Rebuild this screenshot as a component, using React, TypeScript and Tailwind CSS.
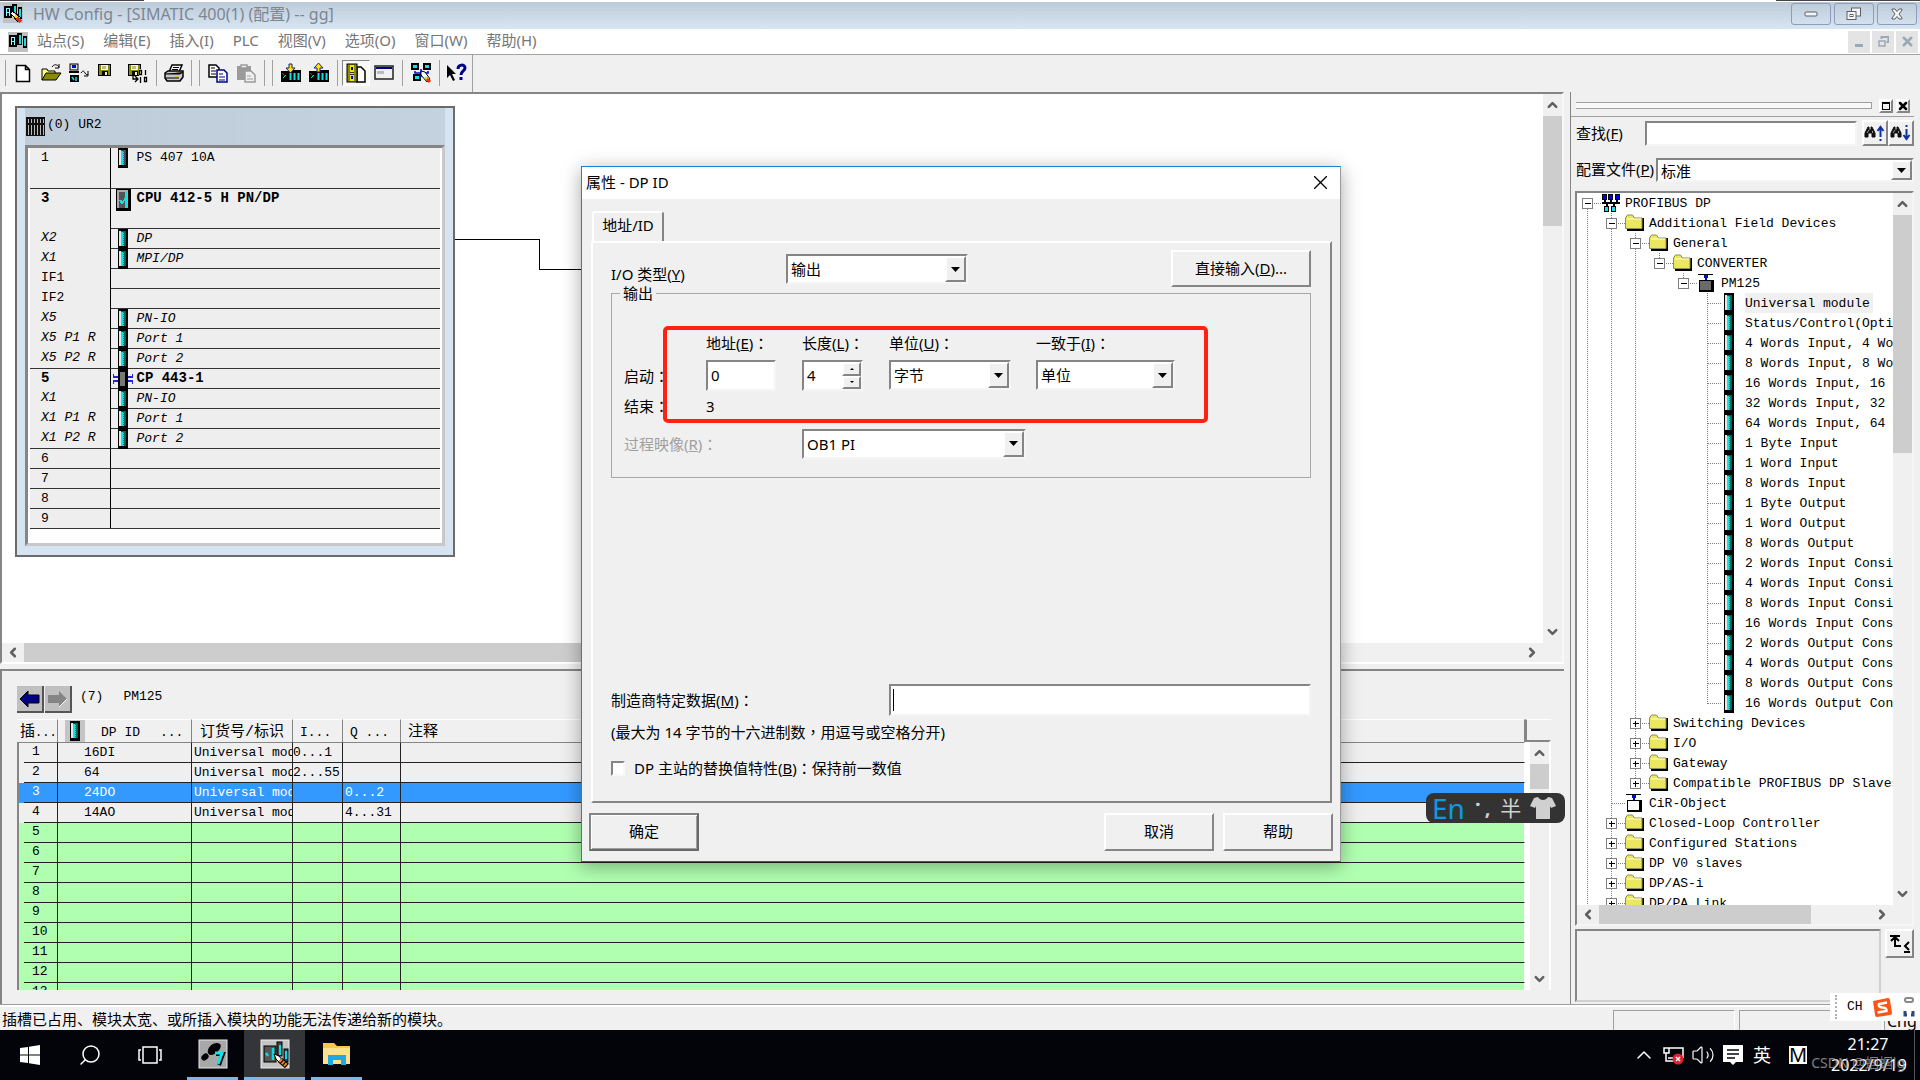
import type { ReactNode } from "react";
import { ChevronDown, ChevronLeft, ChevronRight, ChevronUp, Search, Volume2, X } from "lucide-react";

const MONO =
  "font-['Liberation_Mono','Noto_Sans_CJK_SC',monospace] text-[13px] text-black";
const RAISED =
  "border-2 border-t-white border-l-white border-r-[#858585] border-b-[#858585] bg-[#f0f0f0]";
const SUNKEN =
  "border-2 border-t-[#858585] border-l-[#858585] border-r-[#f5f5f5] border-b-[#f5f5f5] bg-white";

/* ---------- data ---------- */

const menus = ["站点(S)", "编辑(E)", "插入(I)", "PLC", "视图(V)", "选项(O)", "窗口(W)", "帮助(H)"];

type RackRow = {
  slot: string;
  name?: string;
  style?: "bold" | "italic";
  icon?: "module" | "cpu" | "cp";
  tall?: boolean;
  full?: boolean;
};

const rackRows: RackRow[] = [
  { slot: "1", name: "PS 407 10A", icon: "module", tall: true, full: true },
  { slot: "3", name: "CPU 412-5 H PN/DP", style: "bold", icon: "cpu", tall: true },
  { slot: "X2", name: "DP", style: "italic", icon: "module" },
  { slot: "X1", name: "MPI/DP", style: "italic", icon: "module" },
  { slot: "IF1" },
  { slot: "IF2" },
  { slot: "X5", name: "PN-IO", style: "italic", icon: "module" },
  { slot: "X5 P1 R", name: "Port 1", style: "italic", icon: "module" },
  { slot: "X5 P2 R", name: "Port 2", style: "italic", icon: "module", full: true },
  { slot: "5", name: "CP 443-1", style: "bold", icon: "cp" },
  { slot: "X1", name: "PN-IO", style: "italic", icon: "module" },
  { slot: "X1 P1 R", name: "Port 1", style: "italic", icon: "module" },
  { slot: "X1 P2 R", name: "Port 2", style: "italic", icon: "module", full: true },
  { slot: "6", full: true },
  { slot: "7", full: true },
  { slot: "8", full: true },
  { slot: "9", full: true },
];

const slotRows = [
  { n: 1, id: "16DI", order: "Universal module", i: "0...1", q: "" },
  { n: 2, id: "64", order: "Universal module", i: "2...55", q: "" },
  { n: 3, id: "24DO", order: "Universal module", i: "", q: "0...2" },
  { n: 4, id: "14AO", order: "Universal module", i: "", q: "4...31" },
  ...[5, 6, 7, 8, 9, 10, 11, 12, 13].map((n) => ({ n, id: "", order: "", i: "", q: "" })),
];

// guides: "|" line, "L" last child, "T" branch, "-"/"+" expander on a branch,
// "m"/"p" expander on a last child, "r" root expander
type TreeRow = { guides: string; icon: "net" | "folder" | "device" | "object" | "module"; label: string };

const moduleNames = [
  "Universal module",
  "Status/Control(Optional)",
  "4 Words Input, 4 Words Output",
  "8 Words Input, 8 Words Output",
  "16 Words Input, 16 Words Output",
  "32 Words Input, 32 Words Output",
  "64 Words Input, 64 Words Output",
  "1 Byte Input",
  "1 Word Input",
  "8 Words Input",
  "1 Byte Output",
  "1 Word Output",
  "8 Words Output",
  "2 Words Input Consistent",
  "4 Words Input Consistent",
  "8 Words Input Consistent",
  "16 Words Input Consistent",
  "2 Words Output Consistent",
  "4 Words Output Consistent",
  "8 Words Output Consistent",
  "16 Words Output Consistent",
];

const treeRows: TreeRow[] = [
  { guides: "r", icon: "net", label: "PROFIBUS DP" },
  { guides: "|-", icon: "folder", label: "Additional Field Devices" },
  { guides: "||-", icon: "folder", label: "General" },
  { guides: "|||m", icon: "folder", label: "CONVERTER" },
  { guides: "||| m", icon: "device", label: "PM125" },
  ...moduleNames.map((label, i): TreeRow => ({
    guides: i === moduleNames.length - 1 ? "|||  L" : "|||  T",
    icon: "module",
    label,
  })),
  { guides: "||+", icon: "folder", label: "Switching Devices" },
  { guides: "||+", icon: "folder", label: "I/O" },
  { guides: "||+", icon: "folder", label: "Gateway" },
  { guides: "||p", icon: "folder", label: "Compatible PROFIBUS DP Slaves" },
  { guides: "|T", icon: "object", label: "CiR-Object" },
  { guides: "|+", icon: "folder", label: "Closed-Loop Controller" },
  { guides: "|+", icon: "folder", label: "Configured Stations" },
  { guides: "|+", icon: "folder", label: "DP V0 slaves" },
  { guides: "|+", icon: "folder", label: "DP/AS-i" },
  { guides: "|+", icon: "folder", label: "DP/PA Link" },
];

/* ---------- icons ---------- */

function ModuleIcon() {
  return (
    <svg width="10" height="20" viewBox="0 0 10 20" shapeRendering="crispEdges">
      <rect width="10" height="20" fill="#000" />
      <rect x="1" y="2" width="7" height="15" fill="#444" />
      <rect x="1" y="2" width="2" height="15" fill="#e8e8e8" />
      <path d="M4.5 3V17" stroke="#19e0e0" strokeWidth="3" />
      <path d="M6 3V17" stroke="#067878" strokeWidth="2" strokeDasharray="1 1" />
    </svg>
  );
}

function CpuIcon() {
  return (
    <svg width="15" height="22" viewBox="0 0 15 22" shapeRendering="crispEdges">
      <rect width="15" height="22" fill="#000" />
      <rect x="1" y="1" width="11" height="18" fill="#aaa" />
      <rect x="3" y="3" width="8" height="16" fill="#555" />
      <path d="M9.5 3V19" stroke="#19e0e0" strokeWidth="2" />
      <path d="M4 11l2 3 4-5" stroke="#19e0e0" fill="none" strokeWidth="2" />
    </svg>
  );
}

function CpIcon() {
  return (
    <svg width="20" height="20" viewBox="0 0 20 20" shapeRendering="crispEdges">
      <rect x="5" width="10" height="20" fill="#000" />
      <rect x="7" y="3" width="5" height="14" fill="#777" />
      <path d="M0 5v3h5M0 15v-3h5M20 5v3h-5M20 15v-3h-5" stroke="#2424e0" fill="none" strokeWidth="1.5" />
    </svg>
  );
}

function StationIcon({ pencil }: { pencil?: boolean }) {
  return (
    <svg width="20" height="20" viewBox="0 0 20 20" shapeRendering="crispEdges">
      <rect width="20" height="20" fill="#c0c0c0" />
      <rect x="1" y="3" width="8" height="12" fill="#000" />
      <path d="M3 13V5h3v8M3 9h3" stroke="#8ff" fill="none" />
      <rect x="9" y="1" width="5" height="12" fill="#000" />
      <rect x="11" y="3" width="2" height="9" fill="#19e0e0" />
      <rect x="15" y="4" width="4" height="12" fill="#000" />
      <rect x="16" y="6" width="2" height="8" fill="#19e0e0" />
      {pencil && (
        <>
          <path d="M8 9l4 1 6 5-3 4-5-6z" fill="#ffd800" stroke="#000" />
          <path d="M14 15l4 4" stroke="#e33000" strokeWidth="3" />
          <path d="M9 10l3 3" stroke="#fff" strokeWidth="2" />
        </>
      )}
    </svg>
  );
}

function TreeIcon({ kind }: { kind: TreeRow["icon"] }) {
  if (kind === "module") {
    return (
      <span className="ml-[3px]">
        <ModuleIcon />
      </span>
    );
  }
  if (kind === "folder") {
    return (
      <svg width="19" height="18" viewBox="0 0 19 18">
        <path d="M2 16h16V4" stroke="#000" strokeWidth="2" fill="none" />
        <path d="M0.500 14.500V4l2-3h5l2 3h7.500v10.500z" fill="#ebe75f" stroke="#8c8c60" />
        <path d="M2 5h14" stroke="#fffde0" />
      </svg>
    );
  }
  if (kind === "net") {
    return (
      <svg width="20" height="20" viewBox="0 0 20 20" shapeRendering="crispEdges">
        <path d="M4 6v4M10 6v4M16 6v4M1 10h18M6 10v4M13 10v4" stroke="#000" strokeWidth="2" />
        <g fill="#0000e0" stroke="#000">
          <rect x="1.5" y="1.5" width="4" height="5" />
          <rect x="7.500" y="1.5" width="4" height="5" />
          <rect x="14" y="1.5" width="4" height="5" />
        </g>
        <g fill="#19e0e0" stroke="#000">
          <rect x="3.5" y="13.5" width="4" height="5" />
          <rect x="10.500" y="13.5" width="4" height="5" />
        </g>
      </svg>
    );
  }
  return (
    <svg width="18" height="20" viewBox="0 0 18 20" shapeRendering="crispEdges">
      <path d="M1 1h15" stroke="#000" strokeWidth="1" />
      <path d="M9 2v5" stroke="#0000e0" strokeWidth="2" />
      <rect x="7" y="2" width="4" height="3" fill="#0000e0" />
      <rect x="2" y="7" width="15" height="12" fill="#000" />
      <rect x="3" y="8" width="11" height="9" fill={kind === "device" ? "#6a6a6a" : "#fff"} />
    </svg>
  );
}

function ToolIcon({ name }: { name: string }) {
  const disk = (
    <>
      <rect x="0" y="0" width="13" height="12" fill="#000" />
      <rect x="1" y="1" width="11" height="10" fill="#8a8a00" />
      <rect x="3" y="1" width="7" height="5" fill="#f0f0f0" />
      <path d="M5 2v3M7 2v3" stroke="#8a8a00" />
      <rect x="4" y="7" width="6" height="4" fill="#000" />
      <rect x="7" y="8" width="2" height="3" fill="#f0f0f0" />
    </>
  );
  const plc = (
    <>
      <path d="M0 8h8v-1h12v12H0z" fill="#000" />
      <path d="M9.500 10v7M13.500 10v7M17.500 10v7" stroke="#19e0e0" strokeWidth="2" />
      <path d="M1 10l3 3" stroke="#e00000" />
      <path d="M5 12l-3 3" stroke="#19e0e0" />
    </>
  );
  const shapes: Record<string, ReactNode> = {
    new: <path d="M3.500 2.500h9l4 4v12h-13zM12.500 2.500v4h4" fill="#fff" stroke="#000" strokeWidth="1.500" />,
    open: (
      <>
        <path d="M1 17V6h5l1 2h7v3" fill="#ffff80" stroke="#000" />
        <path d="M1 17l4-7h15l-5 7z" fill="#8a8a00" stroke="#000" />
        <path d="M11 4c2-3 5-3 7 0M18 1v4h-4" fill="none" stroke="#000" />
      </>
    ),
    online: (
      <>
        <rect x="1" y="1" width="8" height="6" fill="#ddd" stroke="#000" />
        <rect x="3" y="2" width="4" height="3" fill="#0000e0" />
        <path d="M0 9h10" stroke="#000" strokeWidth="2" />
        <rect x="1" y="12" width="9" height="7" fill="#000" />
        <path d="M3 14l2 3M7 14v4" stroke="#19e0e0" strokeWidth="1.500" />
        <path d="M12 10c2-3 3-2 4 0s2 2 3 1M19 8v5h-4" fill="none" stroke="#000" />
      </>
    ),
    save: <g transform="translate(3 1)">{disk}</g>,
    compile: (
      <>
        <g transform="translate(0 1)">{disk}</g>
        <rect x="11" y="6" width="9" height="14" fill="#f0f0f0" />
        <path d="M11.500 7.500h2v4h-2zM17.500 7v5M12.500 14v6M16.500 14.500h2v4h-2zM5 13v3h5M7 13l3 3-3 3" fill="none" stroke="#000" strokeWidth="1.300" />
      </>
    ),
    print: (
      <>
        <path d="M5 9l3-7h10l-3 7z" fill="#fff" stroke="#000" strokeWidth="1.500" />
        <path d="M9 4.500h6M8 6.500h6" stroke="#000" />
        <path d="M1 10l3-2h15v6l-3 4H3l-2-3z" fill="#c8c8c8" stroke="#000" strokeWidth="1.500" />
        <path d="M1 11h15l3-2M2 15h13" stroke="#000" />
        <path d="M11 13h3" stroke="#d8d800" strokeWidth="2" />
      </>
    ),
    copy: (
      <>
        <path d="M1 2h7l3 3v9H1z" fill="#fff" stroke="#000" strokeWidth="1.500" />
        <path d="M3 5h4M3 8h5M3 11h5" stroke="#000" />
        <path d="M9 7h7l3 3v9H9z" fill="#fff" stroke="#00008b" strokeWidth="1.500" />
        <path d="M11 11h4M11 14h6M11 17h6" stroke="#00008b" />
      </>
    ),
    paste: (
      <>
        <rect x="1" y="3" width="14" height="14" fill="#9b9b9b" />
        <path d="M5 5V2h6v3z" fill="#f0f0f0" stroke="#9b9b9b" strokeWidth="1.500" />
        <path d="M9 8h6l4 4v7H9z" fill="#f0f0f0" stroke="#9b9b9b" strokeWidth="1.500" />
        <path d="M11 13h4M11 16h6" stroke="#9b9b9b" />
      </>
    ),
    download: (
      <>
        {plc}
        <path d="M8 1h3v4h3l-4.500 5L5 5h3z" fill="#ffe600" stroke="#202080" />
      </>
    ),
    upload: (
      <>
        {plc}
        <path d="M8 9h3V5h3L9.500 0 5 5h3z" fill="#ffe600" stroke="#202080" />
      </>
    ),
    catalog: (
      <>
        <path d="M11 4h4l4 4v11h-8z" fill="#fff" stroke="#000" strokeWidth="1.500" />
        <rect x="1" y="1" width="10" height="18" fill="#8a8a00" stroke="#000" />
        <rect x="4" y="2" width="4" height="16" fill="#e8e800" />
        <path d="M6 4v3M6 13v3" stroke="#0000b0" strokeWidth="2" />
        <path d="M4 9.500h4M4 11.500h4" stroke="#333" />
      </>
    ),
    window: (
      <>
        <rect x="1" y="3" width="18" height="13" fill="#f0f0f0" stroke="#222" strokeWidth="1.500" />
        <rect x="2" y="4" width="16" height="2" fill="#00008b" />
        <rect x="3" y="8" width="7" height="3" fill="#bbb" />
      </>
    ),
    network: (
      <>
        <g fill="#19e0e0" stroke="#000" strokeWidth="2">
          <rect x="1" y="1" width="6" height="5" />
          <rect x="13" y="1" width="6" height="5" />
          <rect x="3" y="12" width="6" height="5" />
        </g>
        <path d="M4 8v2h13V8M10 6v8" fill="none" stroke="#0000e0" strokeWidth="1.500" />
        <path d="M10 8l4 1 5 7-3 3-6-7z" fill="#fff" stroke="#000" />
        <path d="M15 15l4 4" stroke="#f03000" strokeWidth="3" />
        <path d="M14 14l2 2" stroke="#ffd800" strokeWidth="2" />
      </>
    ),
    help: (
      <>
        <path d="M1 2l9 9H6l3 6-2 1-3-6-3 3z" fill="#000" />
        <path d="M12 6c0-5 7-5 7-1 0 3-4 3-4 7M15 14v3" fill="none" stroke="#00008b" strokeWidth="3" />
      </>
    ),
  };
  return (
    <svg width="20" height="20" viewBox="0 0 20 20" className="overflow-visible">
      {shapes[name]}
    </svg>
  );
}

/* ---------- shared parts ---------- */

// full-width punctuation sits centred in its cell
function Mark({ children }: { children: string }) {
  return <span className="font-['Noto_Sans_CJK_TC',sans-serif]">{children}</span>;
}

function Arrow({ className = "" }: { className?: string }) {
  return (
    <span className={`pointer-events-none flex items-center justify-center ${RAISED} ${className}`}>
      <svg width="9" height="5" viewBox="0 0 9 5">
        <path d="M0 0h9L4.500 5z" fill="#000" />
      </svg>
    </span>
  );
}

function Combo({ id, value, label, className }: { id: string; value: string; label?: string; className: string }) {
  return (
    <div className={`relative ${SUNKEN} ${className}`}>
      <select id={id} aria-label={label} className="h-full w-full appearance-none bg-white pl-[3px] outline-none">
        <option>{value}</option>
      </select>
      <Arrow className="absolute inset-y-0 right-0 w-[21px]" />
    </div>
  );
}

function VScroll({ thumb }: { thumb: string }) {
  return (
    <div className="flex w-[19px] shrink-0 flex-col items-center bg-[#f0f0f0] text-[#606060]">
      <ChevronUp className="my-0.5 h-[18px] w-[15px] shrink-0" strokeWidth={4} />
      <div className={`w-full bg-[#cdcdcd] ${thumb}`} />
      <ChevronDown className="mt-auto mb-0.5 h-[18px] w-[15px] shrink-0" strokeWidth={4} />
    </div>
  );
}

function HScroll({ thumb }: { thumb: string }) {
  return (
    <div className="flex h-[19px] flex-1 items-center bg-[#f0f0f0] text-[#606060]">
      <ChevronLeft className="mx-0.5 h-[15px] w-[18px] shrink-0" strokeWidth={4} />
      <div className={`h-full bg-[#cdcdcd] ${thumb}`} />
      <ChevronRight className="mr-0.5 ml-auto h-[15px] w-[18px] shrink-0" strokeWidth={4} />
    </div>
  );
}

/* ---------- window chrome ---------- */

function TitleBar() {
  const control = "flex h-[22px] w-10 items-center justify-center rounded-[3px] border border-[#8d9cbb]";
  return (
    <header>
      <div className="flex h-0.5 bg-white">
        <span className="h-px w-36 bg-[#45434a]" />
        <span className="flex-1" />
        <span className="h-px w-36 bg-[#45434a]" />
      </div>
      <div className="flex h-[27px] items-start bg-gradient-to-b from-[#bdcbd9] to-[#d8e5f2] pt-px pl-[3px]">
        <StationIcon pencil />
        <h1 className="ml-[10px] flex-1 text-base leading-[22px] text-[#7a8793]">
          HW Config - [SIMATIC 400(1) (配置) -- gg]
        </h1>
        <div className="flex gap-[3px] pr-[3px]">
          <button className={control} aria-label="最小化">
            <svg width="14" height="6">
              <rect x="1" y="1" width="12" height="4" rx="1" fill="#f4f4f4" stroke="#5b6068" />
            </svg>
          </button>
          <button className={control} aria-label="还原">
            <svg width="16" height="14" fill="#f4f4f4" stroke="#5b6068">
              <rect x="5.500" y="1" width="9" height="8" />
              <rect x="1" y="4.500" width="9" height="8" />
              <rect x="4" y="7.500" width="3" height="2" />
            </svg>
          </button>
          <button className={control} aria-label="关闭">
            <svg width="14" height="12" viewBox="0 0 14 12">
              <path d="M2 1h3l2 2.500L9 1h3v1L9 6l3 4v1H9L7 8.500 5 11H2v-1l3-4-3-4z" fill="#f4f4f4" stroke="#5b6068" />
            </svg>
          </button>
        </div>
      </div>
    </header>
  );
}

function MenuBar() {
  const control = "flex h-[22px] w-[22px] items-center justify-center bg-[#e4e4e4]";
  return (
    <nav className="flex h-[26px] items-center border-b border-[#a3a3a3] bg-white pl-2">
      <StationIcon />
      <div className="ml-[9px] flex flex-1 gap-[19px] pb-[3px] text-[15px] leading-5 text-[#767676]">
        {menus.map((m) => (
          <button key={m}>{m}</button>
        ))}
      </div>
      <div className="flex gap-0.5 pr-[2px]">
        <button className={control} aria-label="最小化文档">
          <svg width="8" height="12">
            <rect y="8" width="8" height="3" fill="#9aa9b8" />
          </svg>
        </button>
        <button className={control} aria-label="还原文档">
          <svg width="11" height="11" fill="none" stroke="#9aa9b8">
            <path d="M3.500 3V1h7v5h-2" strokeWidth="2" />
            <path d="M1 5h6v5H1z" strokeWidth="1.500" />
          </svg>
        </button>
        <button className={control} aria-label="关闭文档">
          <X className="h-[15px] w-[15px] text-[#9aa9b8]" strokeWidth={4} />
        </button>
      </div>
    </nav>
  );
}

function Sep() {
  return <span className="h-[26px] w-px bg-[#a0a0a0]" />;
}

function ToolBar() {
  const btn = (name: string, cls = "w-7") => (
    <button aria-label={name} className={`flex h-[26px] items-center justify-center ${cls}`}>
      <ToolIcon name={name} />
    </button>
  );
  return (
    <div className="flex h-[37px] items-stretch bg-[#f0f0f0] pl-[5px]">
      <div className="flex items-center pb-[2px]">
        <Sep />
        <div className="ml-[3px] flex">
          {btn("new")}
          {btn("open")}
          {btn("online")}
          {btn("save", "w-6")}
          {btn("compile", "ml-[7px] w-7")}
        </div>
        <div className="ml-1 flex items-center gap-[3px]">
          <Sep />
          {btn("print")}
          <Sep />
        </div>
        <div className="ml-[7px] flex items-center">
          <Sep />
          <span className="w-1" />
          {btn("copy")}
          {btn("paste")}
          <span className="w-1" />
          <Sep />
        </div>
        <div className="ml-[7px] flex items-center">
          <Sep />
          <span className="w-1" />
          {btn("download")}
          {btn("upload")}
          <span className="w-1" />
          <Sep />
        </div>
        <div className="ml-1 flex items-center">
          {btn("catalog", "w-7 border border-t-[#858585] border-l-[#858585] border-r-white border-b-white bg-[#f8f8f8]")}
          {btn("window")}
          <span className="w-1" />
          <Sep />
          <span className="w-1" />
          {btn("network")}
          <span className="w-1" />
          <Sep />
          <span className="w-1" />
          {btn("help", "w-6")}
        </div>
      </div>
      <span className="ml-1 w-px bg-[#a0a0a0]" />
    </div>
  );
}

/* ---------- station canvas ---------- */

function RackWindow() {
  return (
    <section className="absolute top-3 left-[13px] w-[440px] border-2 border-[#6b6b6b] bg-[#d6e3f1] px-2 pb-[9px]">
      <div className={`flex h-[37px] items-center gap-[2px] bg-gradient-to-r from-[#bfcddb] to-[#c4d1df] pl-px ${MONO}`}>
        <svg width="19" height="19" viewBox="0 0 19 19" shapeRendering="crispEdges">
          <rect width="19" height="19" fill="#111" />
          <path d="M2.500 2v16M5.500 2v16M8.500 2v16M11.500 2v16M14.500 2v16M17 2v16" stroke="#bbb" />
          <path d="M0 7h19" stroke="#111" strokeWidth="2" />
        </svg>
        <span className="pb-[3px]">(0) UR2</span>
      </div>
      <div className="border-[3px] border-t-[#858585] border-r-[#c8c8c8] border-b-[#c8c8c8] border-l-[#858585] bg-white pr-[2px] pb-[14px] pl-[2px]">
        <table className={`w-full table-fixed border-collapse bg-[#eeeeee] leading-[19px] ${MONO}`}>
          <colgroup>
            <col className="w-20" />
            <col />
          </colgroup>
          <tbody>
            {rackRows.map((row, i) => {
              const weight = row.style === "bold" ? "text-[14px] font-bold" : "";
              const slant = row.style === "italic" ? "italic" : "";
              return (
                <tr key={i} className={row.tall ? "h-10" : "h-5"}>
                  <td
                    className={`border-r border-black p-0 pl-[11px] align-top ${row.full ? "border-b border-b-[#333]" : ""} ${weight} ${slant}`}
                  >
                    {row.slot}
                  </td>
                  <td className="border-b border-b-[#333] p-0 align-top">
                    <div className="flex h-[19px]">
                      <span className="flex w-[26px] shrink-0 justify-center">
                        {row.icon === "module" && (
                          <span className="-ml-0.5">
                            <ModuleIcon />
                          </span>
                        )}
                        {row.icon === "cpu" && <CpuIcon />}
                        {row.icon === "cp" && (
                          <span className="-ml-0.5">
                            <CpIcon />
                          </span>
                        )}
                      </span>
                      <span className={`whitespace-nowrap ${slant} ${weight}`}>{row.name}</span>
                    </div>
                  </td>
                </tr>
              );
            })}
          </tbody>
        </table>
      </div>
    </section>
  );
}

function StationView() {
  return (
    <section className="flex min-h-0 flex-1 flex-col border-2 border-t-[#858585] border-r-[#f8f8f8] border-b-white border-l-[#858585]">
      <div className="flex min-h-0 flex-1">
        <div className="relative min-w-0 flex-1 overflow-hidden bg-white">
          <RackWindow />
          <svg width="140" height="40" viewBox="0 0 140 40" className="absolute top-[140px] left-[453px]" shapeRendering="crispEdges">
            <path d="M0 5.500h84.500v30H140" fill="none" stroke="#000" />
          </svg>
        </div>
        <VScroll thumb="h-[110px]" />
      </div>
      <div className="flex bg-[#f0f0f0] pr-[19px]">
        <HScroll thumb="w-3/4" />
      </div>
    </section>
  );
}

/* ---------- slot table ---------- */

function SlotPanel() {
  const head = "border-r border-r-[#858585] border-t border-t-white p-0 text-left align-middle font-normal whitespace-nowrap";
  const headText = "block pt-[3px]";
  return (
    <section className="flex h-[335px] shrink-0 flex-col border-t-2 border-l-2 border-[#858585] bg-[#f0f0f0] pt-[15px] pr-[13px] pb-[14px] pl-[15px]">
      <div className={`flex h-[27px] items-start ${MONO}`}>
        <button className="flex h-[27px] w-[27px] items-center justify-center border-r-2 border-b-2 border-[#555] bg-[#c0c0c0]" aria-label="后退">
          <svg width="21" height="18" viewBox="0 0 21 18">
            <path d="M1 9l8-8v4h11v8H9v4z" fill="#000084" stroke="#000" />
          </svg>
        </button>
        <button className="ml-px flex h-[27px] w-[27px] items-center justify-center border-r-2 border-b-2 border-[#555] bg-[#c0c0c0]" aria-label="前进">
          <svg width="21" height="18" viewBox="0 0 21 18">
            <path d="M20 9l-8-8v4H1v8h11v4z" fill="#858585" />
            <path d="M20 9l-8 8" stroke="#fff" />
          </svg>
        </button>
        <span className="ml-[8px] leading-[22px]">(7)</span>
        <span className="ml-5 leading-[22px]">PM125</span>
      </div>
      <div className="mt-[6px] flex min-h-0 flex-1 overflow-hidden">
        <div className="min-w-0 flex-1 overflow-hidden">
          <table className={`w-full table-fixed border-separate border-spacing-0 leading-[18px] ${MONO}`}>
            <colgroup>
              <col className="w-[41px]" />
              <col className="w-[134px]" />
              <col className="w-[101px]" />
              <col className="w-[50px]" />
              <col className="w-[58px]" />
              <col />
            </colgroup>
            <thead>
              <tr className="h-[23px]">
                <th className={`${head} pl-[3px]`}>
                  <span className="flex pt-[3px]">
                    <span className="text-[15px]">插</span>
                    <span className="text-xs leading-[18px]">...</span>
                  </span>
                </th>
                <th className={head}>
                  <div className="flex h-[22px] items-center">
                    <span className="ml-[7px] flex h-[22px] w-5 items-center justify-center bg-[#c4c4c4]">
                      <ModuleIcon />
                    </span>
                    <span className="ml-4 pt-[3px]">DP ID</span>
                    <span className="ml-5 pt-[3px]">...</span>
                  </div>
                </th>
                <th className={`${head} pl-2 text-[15px]`}>
                  <span className={headText}>订货号/标识</span>
                </th>
                <th className={`${head} pl-[7px]`}>
                  <span className={headText}>I...</span>
                </th>
                <th className={`${head} pl-[7px]`}>
                  <span className={headText}>Q ...</span>
                </th>
                <th className={`${head} pl-[7px] text-[15px]`}>
                  <span className={headText}>注释</span>
                </th>
              </tr>
            </thead>
            <tbody>
              {slotRows.map((row) => {
                const tone =
                  row.n === 3 ? "bg-[#3399ff] text-white" : row.n > 4 ? "bg-[#b0ffb0]" : "bg-[#efefef]";
                const cell = "h-5 border-r border-b border-[#222] p-0 overflow-hidden whitespace-nowrap";
                const top = row.n === 1 ? "border-t border-t-[#858585]" : "";
                return (
                  <tr key={row.n} className={tone}>
                    <td className={`border-r border-l-2 border-r-[#222] border-l-[#858585] p-0 ${top}`}>
                      <div className="ml-[5px] h-5 border-b border-[#222] pl-2">{row.n}</div>
                    </td>
                    <td className={`${cell} pl-[26px] ${top}`}>{row.id}</td>
                    <td className={`${cell} pl-[2px] ${top}`}>{row.order}</td>
                    <td className={`${cell} ${top}`}>{row.i}</td>
                    <td className={`${cell} pl-[2px] ${top}`}>{row.q}</td>
                    <td className={`${cell} ${top} border-r-white`} />
                  </tr>
                );
              })}
            </tbody>
          </table>
        </div>
        <div className="flex w-[26px] flex-col">
          <div className="h-[21px] border-t border-l-2 border-t-white border-l-[#858585]" />
          <div className="flex min-h-0 flex-1 justify-end border-t-2 border-r-2 border-t-[#858585] border-r-white bg-white">
            <VScroll thumb="h-[25px]" />
          </div>
        </div>
      </div>
    </section>
  );
}

/* ---------- catalog ---------- */

function Guide({ kind }: { kind: string }) {
  const lines: Record<string, string> = {
    "|": "M10.500 0v20",
    T: "M10.500 0v20M11 10.500h13",
    L: "M10.500 0v11M11 10.500h13",
    "-": "M10.500 0v20M11 10.500h13",
    "+": "M10.500 0v20M11 10.500h13",
    m: "M10.500 0v11M11 10.500h13",
    p: "M10.500 0v11M11 10.500h13",
    r: "M10.500 10v10M11 10.500h13",
  };
  const drawing = (
    <svg width="24" height="20" viewBox="0 0 24 20" className="block shrink-0" shapeRendering="crispEdges">
      {lines[kind] && <path d={lines[kind]} fill="none" stroke="#808080" strokeDasharray="1 1" />}
      {"-+mpr".includes(kind) && (
        <>
          <rect x="5.500" y="5.500" width="10" height="10" fill="#fff" stroke="#808080" />
          <path d={kind === "+" || kind === "p" ? "M8 10.500h6M10.500 8v6" : "M8 10.500h6"} stroke="#000" />
        </>
      )}
    </svg>
  );
  if ("-+mpr".includes(kind)) {
    return <button aria-label={kind === "+" || kind === "p" ? "展开" : "折叠"}>{drawing}</button>;
  }
  return drawing;
}

function FindIcon({ up }: { up?: boolean }) {
  return (
    <svg width="22" height="18" viewBox="0 0 22 18">
      <path d="M1 13V9l3-6h1v3h2V3h1l3 6v4H8V9H4v4z" fill="#111" stroke="#111" />
      <path d="M3 9l2-3M8.500 9V7" stroke="#9a9a9a" />
      {up ? (
        <path d="M16.500 17v-2M16.500 13V3M13.500 7l3-4 3 4" fill="none" stroke="#1030a0" strokeWidth="2" />
      ) : (
        <path d="M16.500 1v2M16.500 5v10M13.500 11l3 4 3-4" fill="none" stroke="#1030a0" strokeWidth="2" />
      )}
    </svg>
  );
}

function CatalogPanel() {
  return (
    <aside className="flex w-[350px] shrink-0 flex-col border-l border-[#858585] pr-[6px]">
      <div className="mt-px flex h-6 items-center gap-[3px] border-b border-[#a0a0a0] pt-[2px] pr-1 pl-[5px]">
        <div className="mr-1 h-[7px] flex-1 border-y border-r border-[#a0a0a0] bg-[#f8f8f8]" />
        <button className={`flex h-[14px] w-[14px] items-center justify-center ${RAISED}`} aria-label="停靠">
          <span className="h-2 w-2 border border-t-2 border-black" />
        </button>
        <button className={`flex h-[14px] w-[14px] items-center justify-center ${RAISED}`} aria-label="关闭目录">
          <X className="h-3 w-3 shrink-0 text-black" strokeWidth={5} />
        </button>
      </div>
      <div className="mt-[2px] flex h-7 items-center pl-[5px]">
        <label htmlFor="find" className="w-[69px] text-[15px] whitespace-nowrap text-black">
          查找(<u>F</u>)
        </label>
        <input id="find" className={`h-[25px] min-w-0 flex-1 ${SUNKEN}`} />
        <button className={`ml-[5px] flex h-[26px] w-[26px] items-center justify-center ${RAISED}`} aria-label="向上查找">
          <FindIcon up />
        </button>
        <button className={`flex h-[26px] w-[26px] items-center justify-center ${RAISED}`} aria-label="向下查找">
          <FindIcon />
        </button>
      </div>
      <div className="mt-[11px] flex h-[24px] items-center pl-[5px]">
        <label htmlFor="profile" className="w-20 pb-[2px] text-[15px] whitespace-nowrap text-black">
          配置文件(<u>P</u>)
        </label>
        <Combo id="profile" value="标准" className="h-[24px] flex-1 text-[15px] text-black" />
      </div>
      <div className={`mt-[9px] ml-1 flex min-h-0 flex-1 flex-col ${SUNKEN}`}>
        <div className="flex min-h-0 flex-1">
          <div className={`min-w-0 flex-1 overflow-hidden ${MONO}`} role="tree">
            {treeRows.map((row, i) => (
              <div key={i} className="flex h-5 items-center" role="treeitem">
                {row.guides.split("").map((g, j) => (
                  <Guide key={j} kind={g} />
                ))}
                <span className="flex w-6 shrink-0 items-center">
                  <TreeIcon kind={row.icon} />
                </span>
                <span className={`h-5 leading-[21px] whitespace-nowrap ${i === 5 ? "bg-[#f0f0f0] pr-[3px]" : ""}`}>
                  {row.label}
                </span>
              </div>
            ))}
          </div>
          <VScroll thumb="h-[238px]" />
        </div>
        <div className="flex bg-[#f0f0f0] pr-[19px]">
          <HScroll thumb="w-[212px]" />
        </div>
      </div>
      <div className="mt-[3px] mb-[2px] ml-1 flex h-[73px] items-start gap-1">
        <div className="h-full flex-1 border-2 border-t-[#858585] border-r-[#d0d0d0] border-b-[#d0d0d0] border-l-[#858585]" />
        <button className={`flex h-[29px] w-[29px] items-center justify-center ${RAISED}`} aria-label="显示信息">
          <svg width="22" height="20" viewBox="0 0 22 20" fill="none" stroke="#000" strokeWidth="2">
            <path d="M1 2h10M6 3v9h6M2 7l4-4 4 4M20 8l-4 4 4 4M15 18h6" />
          </svg>
        </button>
      </div>
    </aside>
  );
}

/* ---------- dialog ---------- */

function PropertiesDialog() {
  const button = `h-[38px] w-[110px] pb-[2px] text-center ${RAISED}`;
  return (
    <div
      role="dialog"
      aria-labelledby="dialog-title"
      className="absolute top-[166px] left-[581px] flex h-[696px] w-[760px] flex-col border border-t-[#1883d7] border-r-[#9a9a9a] border-b-[#555] border-l-[#1883d7] bg-[#f0f0f0] text-[15px] leading-5 text-black shadow-[0_4px_18px_rgba(0,0,0,0.35)]"
    >
      <div className="flex h-8 shrink-0 items-center justify-between bg-white pr-[13px] pb-[2px] pl-1">
        <h2 id="dialog-title">属性 - DP ID</h2>
        <button aria-label="关闭对话框">
          <svg width="13" height="13" viewBox="0 0 13 13">
            <path d="M0 0l13 13M13 0L0 13" stroke="#000" strokeWidth="1.300" />
          </svg>
        </button>
      </div>
      <div role="tablist" className="mt-3 ml-[10px] flex h-[30px]">
        <button
          role="tab"
          aria-selected="true"
          className="w-[72px] rounded-t-[3px] border-t-2 border-r-2 border-l-2 border-t-white border-r-[#858585] border-l-white pb-[5px]"
        >
          地址/ID
        </button>
      </div>
      <div role="tabpanel" className={`mr-2 ml-[9px] flex min-h-0 flex-1 flex-col pt-[7px] pr-[19px] pb-[23px] pl-[18px] ${RAISED}`}>
        <div className="flex h-9 items-start">
          <label htmlFor="io-type" className="w-[175px] self-end pb-[2px]">
            I/O 类型(<u>Y</u>)
          </label>
          <Combo id="io-type" value="输出" className="mt-1 h-[30px] w-[182px]" />
          <button className={`ml-auto h-[37px] w-[140px] pb-[2px] ${RAISED}`}>
            直接输入(<u>D</u>)...
          </button>
        </div>
        <fieldset className="h-[192px] border border-[#a8a8a8] pl-3">
          <legend className="ml-[-4px] px-[3px] leading-[14px]">输出</legend>
          <div className="relative mt-[34px]">
            <div className="flex h-5 leading-[18px]">
              <label htmlFor="addr" className="ml-[82px] w-24">
                地址(<u>E</u>)<Mark>：</Mark>
              </label>
              <label htmlFor="length" className="w-[87px]">
                长度(<u>L</u>)<Mark>：</Mark>
              </label>
              <label htmlFor="unit" className="w-[147px]">
                单位(<u>U</u>)<Mark>：</Mark>
              </label>
              <label htmlFor="consistent">
                一致于(<u>I</u>)<Mark>：</Mark>
              </label>
            </div>
            <div className="mt-[6px] flex h-[31px] items-start">
              <span className="w-[82px] self-center">
                启动<Mark>：</Mark>
              </span>
              <div className="w-24">
                <input id="addr" defaultValue="0" className={`h-[31px] w-[70px] pb-[2px] pl-[3px] outline-none ${SUNKEN}`} />
              </div>
              <div className="w-[87px]">
                <div className={`flex h-[31px] w-[61px] ${SUNKEN}`}>
                  <input id="length" defaultValue="4" className="w-[38px] pb-[2px] pl-[3px] outline-none" />
                  <div className="flex flex-1 flex-col">
                    <button aria-label="增加" className={`flex flex-1 items-center justify-center ${RAISED}`}>
                      <svg width="4" height="2">
                        <path d="M0 2h4L2 0z" />
                      </svg>
                    </button>
                    <button aria-label="减少" className={`flex flex-1 items-center justify-center ${RAISED}`}>
                      <svg width="4" height="2">
                        <path d="M0 0h4L2 2z" />
                      </svg>
                    </button>
                  </div>
                </div>
              </div>
              <div className="w-[147px]">
                <Combo id="unit" value="字节" className="h-[30px] w-[122px]" />
              </div>
              <Combo id="consistent" value="单位" className="h-[30px] w-[139px]" />
            </div>
            <div className="mt-[5px] flex h-5">
              <span className="w-[82px]">
                结束<Mark>：</Mark>
              </span>
              <output>3</output>
            </div>
            <div className="pointer-events-none absolute -top-2 left-[39px] h-[97px] w-[545px] rounded-[5px] border-4 border-[#ff2213]" />
          </div>
          <div className="mt-3 flex h-[31px] items-center">
            <label htmlFor="image" className="w-[178px] text-[#a0a0a0]">
              过程映像(<u>R</u>)<Mark>：</Mark>
            </label>
            <Combo id="image" value="OB1 PI" className="h-[30px] w-[224px]" />
          </div>
        </fieldset>
        <div className="mt-auto flex items-center">
          <label htmlFor="vendor" className="w-[278px]">
            制造商特定数据(<u>M</u>)<Mark>：</Mark>
          </label>
          <div className={`flex h-8 flex-1 items-center pl-[2px] ${SUNKEN}`}>
            <span className="h-[22px] w-px bg-black" />
            <input id="vendor" className="h-full min-w-0 flex-1 outline-none" />
          </div>
        </div>
        <p className="mt-[6px]">
          (最大为 14 字节的十六进制数<Mark>，</Mark>用逗号或空格分开)
        </p>
        <div className="mt-4 flex items-center gap-[9px]">
          <input
            id="substitute"
            type="checkbox"
            className="h-[15px] w-[14px] appearance-none border-2 border-t-[#858585] border-r-[#f8f8f8] border-b-[#f8f8f8] border-l-[#858585] bg-white"
          />
          <label htmlFor="substitute">
            DP 主站的替换值特性(<u>B</u>)<Mark>：</Mark>保持前一数值
          </label>
        </div>
      </div>
      <div className="flex gap-[9px] pt-[10px] pr-[7px] pb-[10px] pl-[7px]">
        <button className="mr-auto h-[38px] w-[110px] border-2 border-t-[#858585] border-r-[#6a6a6a] border-b-[#6a6a6a] border-l-[#858585] pb-[2px] shadow-[inset_1px_1px_0_#fff,inset_-1px_-1px_0_#a0a0a0]">
          确定
        </button>
        <button className={button}>取消</button>
        <button className={button}>帮助</button>
      </div>
    </div>
  );
}

/* ---------- status, overlays and taskbar ---------- */

function StatusBar() {
  const box = "h-5 border-t border-l border-[#a0a0a0]";
  return (
    <footer className="flex h-[25px] items-end border-t-2 border-white pl-[2px] text-[15px] leading-[22px] text-black">
      <span className="flex-1 whitespace-nowrap">插槽已占用、模块太宽、或所插入模块的功能无法传递给新的模块。</span>
      <div className={`w-[122px] border-r border-r-white ${box}`} />
      <div className={`ml-1 w-[144px] border-r border-r-white ${box}`} />
      <div className={`ml-px w-9 overflow-hidden pl-[2px] text-base leading-5 ${box}`}>Chg</div>
    </footer>
  );
}

function ImeBar() {
  return (
    <div className="absolute top-[793px] right-[355px] flex h-[30px] w-[139px] items-center overflow-hidden rounded-lg bg-[#333] text-[#d0d0d0]">
      <span className="ml-[6px] w-9 text-[28px] leading-[30px] text-[#0f9ae0]">En</span>
      <span className="ml-[7px] self-start text-xl leading-[22px] font-bold">·</span>
      <span className="ml-1 text-xl leading-[26px] font-bold">,</span>
      <span className="ml-[10px] text-[21px] leading-[30px]">半</span>
      <svg width="26" height="22" viewBox="0 0 26 22" className="ml-[9px]">
        <path d="M8 0c2 4 8 4 10 0l4 1 4 8-5 2-1-2v13H6V9l-1 2-5-2 4-8z" fill="#d0d0d0" />
      </svg>
    </div>
  );
}

function LanguageBar() {
  return (
    <div className={`absolute right-0 bottom-[59px] flex h-7 w-[90px] items-center bg-white ${MONO}`}>
      <span className="ml-[5px] h-6 border-l-2 border-dotted border-[#b0b0b0]" />
      <span className="ml-[10px]">CH</span>
      <svg width="21" height="21" viewBox="0 0 21 21" className="ml-[9px]">
        <path d="M1 4l15-3q2 0 2 2l2 13q0 2-2 2L5 20q-2 0-2-2z" fill="#fa5416" />
        <path d="M15 5.500l-8 1.500q-1 3 3 3.500 5 0 4.500 3.500l-9 1.500" fill="none" stroke="#fff" strokeWidth="2.500" />
      </svg>
      <svg width="12" height="22" viewBox="0 0 12 22" className="ml-[10px]" fill="none" strokeWidth="2">
        <rect x="2" y="2" width="8" height="4" rx="2" stroke="#888" />
        <path d="M2 15v4h2M8 19h2v-4" stroke="#284a80" strokeWidth="3" />
      </svg>
    </div>
  );
}

function TaskBar() {
  const app = "flex h-full items-center justify-center border-b-[3px] border-[#76b9ed]";
  return (
    <nav className="flex h-[50px] shrink-0 items-center bg-[#020409] text-white">
      <button className="flex w-[60px] justify-center" aria-label="开始">
        <svg width="20" height="20" viewBox="0 0 20 20" fill="#fff">
          <path d="M0 3l8-1v7.500H0zM9 1.800L20 0v9.500H9zM0 10.500h8V18l-8-1zM9 10.500h11V20L9 18.200z" />
        </svg>
      </button>
      <button className="flex w-[60px] justify-center" aria-label="搜索">
        <Search className="h-6 w-6 -scale-x-100" strokeWidth={1.5} />
      </button>
      <button className="flex w-[60px] justify-center" aria-label="任务视图">
        <svg width="24" height="20" viewBox="0 0 24 20" fill="none" stroke="#fff" strokeWidth="1.500">
          <path d="M5 2h14v16H5zM3 5H1v10h2M21 5h2v10h-2" />
        </svg>
      </button>
      <button className={`ml-[7px] w-[51px] ${app}`} aria-label="SIMATIC Manager">
        <svg width="30" height="30" viewBox="0 0 30 30">
          <rect x="1" y="1" width="28" height="28" fill="#a8a8a8" stroke="#e8e8e8" />
          <path d="M10 11c1-5 8-9 12-6 3 3-3 10-8 11-3 0-5-2-4-5z" fill="#000" />
          <ellipse cx="7" cy="18" rx="4" ry="3" transform="rotate(-40 7 18)" fill="#000" />
          <path d="M18 15h7l-4 11" fill="none" stroke="#000" strokeWidth="4" />
          <path d="M17 14h7l-4 11" fill="none" stroke="#00e8f0" strokeWidth="3" />
        </svg>
      </button>
      <button className={`ml-[6px] w-[61px] bg-[#343539] ${app}`} aria-label="HW Config">
        <svg width="30" height="30" viewBox="0 0 30 30">
          <rect x="1" y="1" width="28" height="28" fill="#c4c4c4" stroke="#f0f0f0" />
          <rect x="4" y="7" width="12" height="16" fill="#555" stroke="#000" />
          <path d="M13 9v12M6 14l2 3" stroke="#00e0e8" strokeWidth="2.500" />
          <rect x="17" y="3" width="5" height="14" fill="#444" stroke="#000" />
          <path d="M20 6v10" stroke="#00e0e8" strokeWidth="2" />
          <rect x="24" y="10" width="4" height="13" fill="#444" stroke="#000" />
          <path d="M26 12v8" stroke="#00e0e8" strokeWidth="2" />
          <path d="M14 15l5 2 4 5-3 2-4-4z" fill="#fff" stroke="#000" />
          <path d="M20 21l7 6" stroke="#000" strokeWidth="6" />
          <path d="M20 21l7 6" stroke="#f08020" strokeWidth="4" strokeDasharray="2 1" />
        </svg>
      </button>
      <button className={`ml-[6px] w-[51px] ${app}`} aria-label="文件资源管理器">
        <svg width="28" height="24" viewBox="0 0 28 24">
          <path d="M0 1h11l3 3h13v18H0z" fill="#f5c84c" />
          <path d="M0 6h27v16H0z" fill="#ffe08c" />
          <path d="M5 23V13h18v10h-5v-5h-8v5z" fill="#1fa8e8" />
        </svg>
      </button>
      <div className="ml-auto flex h-full items-center">
        <ChevronUp className="h-6 w-6" strokeWidth={1.5} />
        <svg width="22" height="20" viewBox="0 0 22 20" className="ml-[7px]" fill="none" stroke="#fff" strokeWidth="1.500">
          <path d="M6 3h14v10M1 3h5v5H1zM3 8v8h8M5 13h5" />
          <circle cx="15" cy="14" r="5.500" fill="#e02030" stroke="none" />
          <path d="M13 12l4 4M17 12l-4 4" />
        </svg>
        <Volume2 className="ml-[6px] h-6 w-6" strokeWidth={1.2} />
        <svg width="20" height="20" viewBox="0 0 20 20" className="ml-2">
          <path d="M0 0h20v17h-7l-3 3-3-3H0z" fill="#fff" />
          <path d="M4 5h12M4 9h12M4 13h8" stroke="#020409" strokeWidth="1.500" />
        </svg>
        <span className="ml-[10px] text-lg leading-6">英</span>
        <span className="ml-[18px] flex h-[18px] w-[18px] items-center justify-center bg-white text-xl leading-[18px] text-black">M</span>
        <div className="relative ml-6 w-[74px] pb-px text-center text-base leading-[21px] whitespace-nowrap">
          <div>21:27</div>
          <div>2022/9/19</div>
          <span className="absolute right-0 bottom-1 text-sm leading-5 text-[#a0a0a0] opacity-80">CSDN @蝈蝈lg</span>
        </div>
        <span className="ml-[9px] h-full w-px bg-[#555]" />
        <span className="w-[5px]" />
      </div>
    </nav>
  );
}

export default function App() {
  return (
    <div className="relative flex h-screen flex-col overflow-hidden bg-[#f0f0f0] font-['Noto_Sans','Noto_Sans_CJK_SC',sans-serif]">
      <TitleBar />
      <MenuBar />
      <ToolBar />
      <main className="flex min-h-0 flex-1 gap-[6px] border-b border-[#a0a0a0]">
        <div className="flex min-w-0 flex-1 flex-col gap-[5px]">
          <StationView />
          <SlotPanel />
        </div>
        <CatalogPanel />
      </main>
      <StatusBar />
      <TaskBar />
      <PropertiesDialog />
      <ImeBar />
      <LanguageBar />
    </div>
  );
}
